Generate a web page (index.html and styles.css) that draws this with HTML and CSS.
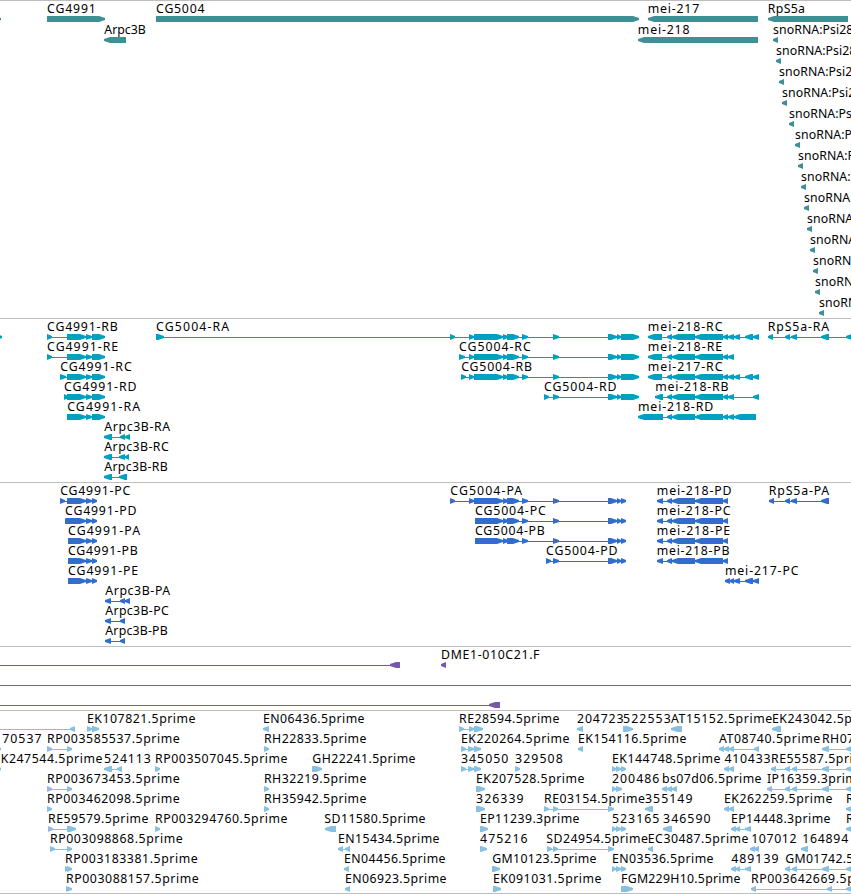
FILE: index.html
```html
<!DOCTYPE html>
<html lang="en">
<head>
<meta charset="UTF-8">
<meta name="viewport" content="width=device-width, initial-scale=1.0">
<title>Genome Browser</title>
<link rel="stylesheet" href="styles.css">
</head>
<body>
<main class="browser">
  <section class="track genes" id="genes"></section>
  <section class="track transcripts" id="transcripts"></section>
  <section class="track proteins" id="proteins"></section>
  <section class="track bacs" id="bacs"></section>
  <section class="track ests" id="ests"></section>
</main>
<script src="script.js"></script>
</body>
</html>
```
FILE: styles.css
```css
body {
  margin:0;
  background:#fff;
  color:#000;
  font-family:'Noto Sans', 'DejaVu Sans', sans-serif;
  overflow:hidden;
}
.browser {display:flex; flex-direction:column; border-bottom:1px solid #bebebe;}
.track {border-top:1px solid #bebebe; box-sizing:border-box; overflow:hidden;}
.track svg {display:block; width:100%; height:100%;}
.track text {font-size:12.3px; fill:#000;}
.genes {height:318px; color:#3f8f94;}
.transcripts {height:164px; color:#00a0c0;}
.proteins {height:164px; color:#316dcd;}
.bacs {height:64px; color:#7759a9;}
.ests {height:183px; color:#89bfdf;}
.exon {fill:currentColor;}
.intron {fill:currentColor;}
```
FILE: script.js
```js
// row | label | label left | label right | strand | exons (start:end)
const tracks = {
  genes: {pitch: 21, data: `
0||0|0|>|-5:1
0|CG4991|47.5|95.7|>|47:105
0|CG5004|156.5|204.3|>|156:639
0|mei-217|648.5|699|<|648:758
0|RpS5a|768.5|804.8|<|768:848
1|Arpc3B|104.3|145.5|<|104:126
1|mei-218|638.5|689.3|<|638:758
1|snoRNA:Psi28S|773.5|860|<|773:778
2|snoRNA:Psi28S|776.5|863|<|776:781
3|snoRNA:Psi28S|779.5|866|<|779:784
4|snoRNA:Psi28S|782.5|869|<|782:787
5|snoRNA:Psi28S|789.5|876|<|789:794
6|snoRNA:Psi28S|795.5|882|<|795:800
7|snoRNA:Psi28S|798.5|885|<|798:803
8|snoRNA:Psi28S|801.5|888|<|801:806
9|snoRNA:Psi28S|804.5|891|<|804:809
10|snoRNA:Psi28S|807.5|894|<|807:812
11|snoRNA:Psi28S|810.5|897|<|810:815
12|snoRNA:Psi28S|813.5|900|<|813:818
13|snoRNA:Psi28S|815.5|902|<|815:820
14|snoRNA:Psi28S|819.5|906|<|819:824`},
  transcripts: {pitch: 20, data: `
0||0|0|>|-4:2
0|CG4991-RB|47.5|117.5|>|47:52 67:86 86:92 92:105
0|CG5004-RA|156.5|229|>|156:164 450:455 469:474 474:503 503:508 507:519 522:528 553:559 608:617 617:621 621:639
0|mei-218-RC|648.5|722.3|<|648:662 667:672 672:695 695:723 723:728 728:734 734:740 745:753 753:759
0|RpS5a-RA|768.5|829|<|768:773 785:790 791:797 821:829 846:852
1|CG4991-RE|47.5|118|>|47:52 67:86 86:92 92:105
1|CG5004-RC|459.5|530.5|>|459:465 469:474 474:503 503:508 507:519 522:528 553:559 608:617 617:621 621:639
1|mei-218-RE|648.5|722|<|648:662 667:672 672:695 695:723 723:728 728:734
2|CG4991-RC|60.7|131.5|>|60:66 67:86 86:92 92:105
2|CG5004-RB|461.7|531.7|>|461:466 469:474 474:503 503:508 507:519 522:528 553:559 608:617 617:621 621:639
2|mei-217-RC|648.5|722.3|<|648:662 667:672 672:695 695:723 723:728 728:734 734:740 745:753 753:759
3|CG4991-RD|64.5|136.3|>|64:68 67:86 86:92 92:105
3|CG5004-RD|544.5|616.3|>|544:549 553:559 608:617 617:621 621:639
3|mei-218-RB|656|728.3|<|655:663 667:672 672:695 695:723 723:728 728:734 753:759
4|CG4991-RA|67.6|140|>|67:86 86:92 92:105
4|mei-218-RD|638.7|713|<|638:663 667:672 672:695 695:723 723:728 728:734 734:756
5|Arpc3B-RA|104.3|170|<|104:112 120:125 125:130
6|Arpc3B-RC|104.3|168.5|<|104:112 119:125 125:129
7|Arpc3B-RB|104.3|167.5|<|104:112 119:127`},
  proteins: {pitch: 20, data: `
0|CG4991-PC|60.7|130|>|60:65 67:86 86:92 92:97
0|CG5004-PA|450.7|522|>|450:455 469:474 474:503 503:508 507:519 522:528 553:559 608:617 617:621 621:626
0|mei-218-PD|657.5|731.3|<|657:663 667:672 672:695 695:723 723:728
0|RpS5a-PA|769.5|829|<|769:774 785:790 791:797 821:829
1|CG4991-PD|65.5|136.3|>|65:68 66:86 86:92 92:97
1|CG5004-PC|475.5|545.5|>|475:503 503:508 507:519 522:528 553:559 608:617 617:621 621:626
1|mei-218-PC|657.5|730.3|<|657:663 667:672 672:695 695:723 723:728
2|CG4991-PA|68.5|139.8|>|68:86 86:92 92:97
2|CG5004-PB|475.5|544.5|>|475:503 503:508 507:519 522:528 553:559 608:617 617:621 621:626
2|mei-218-PE|657.5|730|<|657:663 667:672 672:695 695:723 723:728
3|CG4991-PB|68.5|137.5|>|68:86 86:92 92:97
3|CG5004-PD|546.5|617.3|>|546:551 553:559 608:617 617:621 621:626
3|mei-218-PB|657.5|729.3|<|657:663 667:672 672:695 695:723 723:728
4|CG4991-PE|68.5|138|>|68:86 86:92 92:97
4|mei-217-PC|725.7|798.3|<|725:730 730:734 734:740 745:753 753:759
5|Arpc3B-PA|105.3|170|<|105:111 120:125 125:130
6|Arpc3B-PC|105.3|168.5|<|105:111 120:125
7|Arpc3B-PB|105.3|167.5|<|105:111 120:125`},
  bacs: {pitch: 20, data: `
0||0|0|<|-20:-10 390:400
0|DME1-010C21.F|441.7|539.3|<|441:446
1||0|0|<|-20:-10 2000:2010
2||0|0|<|-20:-10 489:500`},
  ests: {pitch: 20, data: `
0||0|0|<|-20:-10 70:75
0|EK107821.5prime|87.7|195.3|>|87:92 92:99
0|EN06436.5prime|263.7|364.3|<|263:269
0|RE28594.5prime|459.7|559.3|>|459:464 469:474 474:483
0|204723|577.6|623.3|<|577:583
0|522553|623.6|670.5|>|623:633
0|AT15152.5prime|671|772|<|671:682
0|EK243042.5prime|772.7|880.5|<|772:781
1|70537|2.7|41.3|>|-4:1
1|RP003585537.5prime|47.7|179.5|>|47:52 67:72
1|RH22833.5prime|264.7|366.3|>|264:269
1|EK220264.5prime|461.7|569.3|>|461:466 468:474 474:481
1|EK154116.5prime|578.7|686.3|<|578:583
1|AT08740.5prime|719|820|<|719:724 724:729 729:734 754:759
1|RH07045.5prime|822.7|924|<|822:829 846:852
2|EK247544.5prime|-6|102.3|>|-4:1
2|524113|104.6|150.5|<|104:112 117:122
2|RP003507045.5prime|155.7|287.3|>|155:160
2|GH22241.5prime|312.7|415.3|>|312:322
2|345050|461.6|508|>|461:466 468:474 474:481
2|329508|515.6|562.5|>|515:520
2|EK144748.5prime|612.7|720.3|>|612:616 616:621 621:626
2|410433|725|770.3|<|724:729 729:734
2|RE55587.5prime|771.7|872|<|771:776 785:790 792:797 822:829 846:852
3|RP003673453.5prime|47.7|179.5|>|47:52 67:72
3|RH32219.5prime|264.7|366.3|>|264:269
3|EK207528.5prime|476.7|584.3|>|476:485
3|200486|612.6|659|>|612:616 616:622
3|bs07d06.5prime|662.7|761.3|<|662:667 667:672 672:677
3|IP16359.3prime|767.7|864|<|767:772 785:790 792:797 822:829 846:852
4|RP003462098.5prime|47.7|179.5|>|47:52
4|RH35942.5prime|264.7|366.3|>|264:269
4|326339|476.6|523.3|>|476:485
4|RE03154.5prime|544.7|644.7|>|544:549 553:558 608:614
4|355149|645.5|692.3|<|645:653
4|EK262259.5prime|724.7|832.3|<|724:729 729:734
4|RE|846.7|861|<|846:852
5|RE59579.5prime|48.7|148.3|>|48:53 67:76
5|RP003294760.5prime|155.7|287.3|>|155:160
5|SD11580.5prime|324.7|425.3|<|325:336
5|EP11239.3prime|480.7|579.3|>|480:488
5|523165|612.6|659|>|612:616 616:621 621:626
5|346590|663.6|710.3|<|663:672
5|EP14448.3prime|731.7|830.3|<|731:736 736:740 745:751
5|RE|846.7|861|<|846:852
6|RP003098868.5prime|50.7|182.5|>|50:55 67:72
6|EN15434.5prime|338.7|439.3|<|338:343 345:350
6|475216|480.6|527.3|>|480:487
6|SD24954.5prime|546.7|647.7|>|547:552 553:558 608:614
6|EC30487.5prime|648.5|748.3|<|648:653
6|107012|751.7|796.3|<|750:755 754:759
6|164894|802.7|848|<|801:808
7|RP003183381.5prime|65.7|197.5|>|65:69 67:72
7|EN04456.5prime|344.7|445.3|<|344:349
7|GM10123.5prime|492.7|596.3|>|492:500
7|EN03536.5prime|612.7|713.3|>|612:616 616:621 621:626
7|489139|731.7|778.3|<|731:736 736:740 745:751
7|GM01742.5prime|785.7|889|<|785:790 792:797 822:829 846:852
8|RP003088157.5prime|66.7|198.5|>|66:72
8|EN06923.5prime|345.7|446.3|<|345:350
8|EK091031.5prime|493.7|601.3|>|493:501
8|FGM229H10.5prime|621.7|740.3|>|621:633
8|RP003642669.5prime|751.7|883.5|<|751:756 827:832 846:852`}
};

// space left of the first letter inside its advance width
function bearing(ch){
  if(ch==='A') return 0;
  if('CGSs'.includes(ch)) return 0.4;
  if(/\d/.test(ch)) return 0.5;
  return 0.7;
}
function exon(a,b,y,strand){
  const head=Math.min(b-a,6);
  if(strand==='>') return `M${a} ${y}H${b-head}L${b} ${y+2}V${y+4}L${b-head} ${y+6}H${a}Z`;
  return `M${b} ${y}H${a+head}L${a} ${y+2}V${y+4}L${a+head} ${y+6}H${b}Z`;
}
for(const [id,track] of Object.entries(tracks)){
  let out='';
  track.data.trim().split('\n').forEach(line=>{
    const [row,label,x0,x1,strand,list]=line.split('|');
    const top=row*track.pitch;
    const exons=list.split(' ').map(e=>e.split(':').map(Number));
    const start=exons[0][0], end=exons[exons.length-1][1];
    if(exons.length>1) out+=`<rect class="intron" x="${start+1}" y="${top+18}" width="${end-start-2}" height="1"/>`;
    out+=`<path class="exon" d="${exons.map(e=>exon(e[0],e[1],top+15,strand)).join('')}"/>`;
    if(label){
      const x=x0-bearing(label[0]);
      out+=`<text x="${x}" y="${top+12}" textLength="${+x1+0.2-x}">${label}</text>`;
    }
  });
  document.getElementById(id).innerHTML=`<svg>${out}</svg>`;
}
```
